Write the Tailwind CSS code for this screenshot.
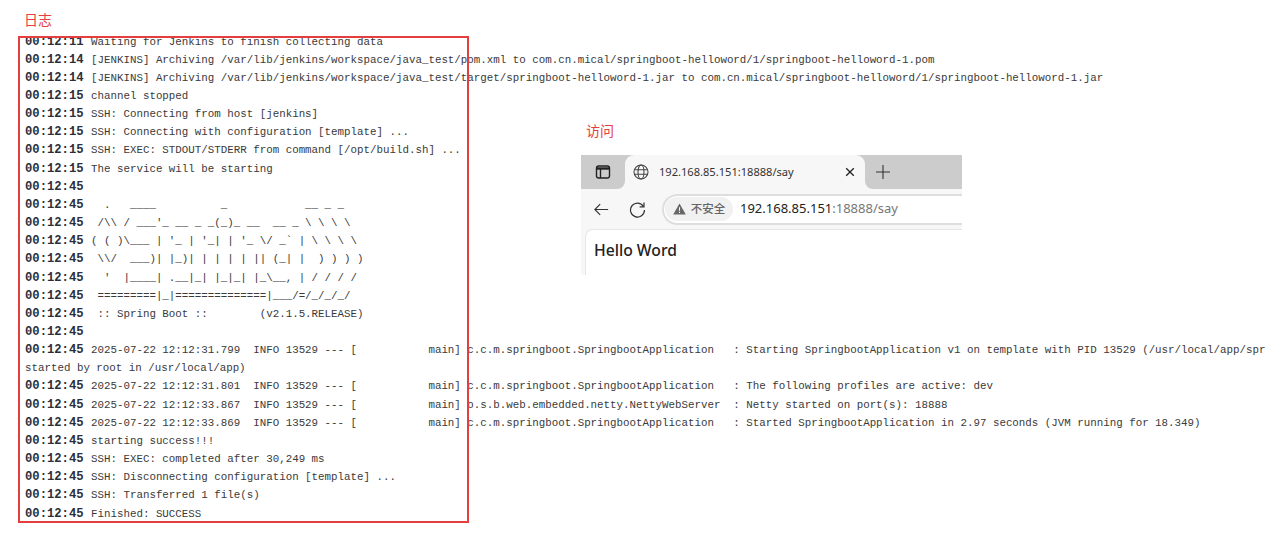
<!DOCTYPE html>
<html lang="en">
<head>
  <meta charset="UTF-8" />
  <title>日志</title>
  <script src="https://cdn.jsdelivr.net/npm/@tailwindcss/browser@4"></script>
</head>
<body class="bg-white">
<div class="relative w-[1274px] h-[538px] overflow-hidden font-['Liberation_Mono',monospace]">

  <!-- heading -->
  <div class="h-[36px] pl-[24px] pt-[9px] text-[14px] leading-[20px] text-[#e53e3e] font-['Noto_Sans_CJK_SC','Noto_Sans',sans-serif]">日志</div>

  <!-- log lines -->
  <div class="h-[486px] overflow-hidden pl-[25px] text-[10.82px] leading-[18.16px] text-[#3a3a3a] [&>div]:h-[18.16px] [&>div]:whitespace-pre [&_b]:inline-block [&_b]:w-[66px] [&_b]:text-[12.2px] [&_b]:text-[#2b2f3a]">
    <div class="-mt-[3.5px]"><b>00:12:11</b>Waiting for Jenkins to finish collecting data</div>
    <div><b>00:12:14</b>[JENKINS] Archiving /var/lib/jenkins/workspace/java_test/pom.xml to com.cn.mical/springboot-helloword/1/springboot-helloword-1.pom</div>
    <div><b>00:12:14</b>[JENKINS] Archiving /var/lib/jenkins/workspace/java_test/target/springboot-helloword-1.jar to com.cn.mical/springboot-helloword/1/springboot-helloword-1.jar</div>
    <div><b>00:12:15</b>channel stopped</div>
    <div><b>00:12:15</b>SSH: Connecting from host [jenkins]</div>
    <div><b>00:12:15</b>SSH: Connecting with configuration [template] ...</div>
    <div><b>00:12:15</b>SSH: EXEC: STDOUT/STDERR from command [/opt/build.sh] ...</div>
    <div><b>00:12:15</b>The service will be starting</div>
    <div><b>00:12:45</b></div>
    <div><b>00:12:45</b>  .   ____          _            __ _ _</div>
    <div><b>00:12:45</b> /\\ / ___'_ __ _ _(_)_ __  __ _ \ \ \ \</div>
    <div><b>00:12:45</b>( ( )\___ | '_ | '_| | '_ \/ _` | \ \ \ \</div>
    <div><b>00:12:45</b> \\/  ___)| |_)| | | | | || (_| |  ) ) ) )</div>
    <div><b>00:12:45</b>  '  |____| .__|_| |_|_| |_\__, | / / / /</div>
    <div><b>00:12:45</b> =========|_|==============|___/=/_/_/_/</div>
    <div><b>00:12:45</b> :: Spring Boot ::        (v2.1.5.RELEASE)</div>
    <div><b>00:12:45</b></div>
    <div><b>00:12:45</b>2025-07-22 12:12:31.799  INFO 13529 --- [           main] c.c.m.springboot.SpringbootApplication   : Starting SpringbootApplication v1 on template with PID 13529 (/usr/local/app/spr</div>
    <div>started by root in /usr/local/app)</div>
    <div><b>00:12:45</b>2025-07-22 12:12:31.801  INFO 13529 --- [           main] c.c.m.springboot.SpringbootApplication   : The following profiles are active: dev</div>
    <div><b>00:12:45</b>2025-07-22 12:12:33.867  INFO 13529 --- [           main] o.s.b.web.embedded.netty.NettyWebServer  : Netty started on port(s): 18888</div>
    <div><b>00:12:45</b>2025-07-22 12:12:33.869  INFO 13529 --- [           main] c.c.m.springboot.SpringbootApplication   : Started SpringbootApplication in 2.97 seconds (JVM running for 18.349)</div>
    <div><b>00:12:45</b>starting success!!!</div>
    <div><b>00:12:45</b>SSH: EXEC: completed after 30,249 ms</div>
    <div><b>00:12:45</b>SSH: Disconnecting configuration [template] ...</div>
    <div><b>00:12:45</b>SSH: Transferred 1 file(s)</div>
    <div><b>00:12:45</b>Finished: SUCCESS</div>
  </div>

  <!-- red highlight box over the log -->
  <div class="absolute left-[18px] top-[36px] w-[451px] h-[487px] border-2 border-[#e53e3e]"></div>

  <!-- browser snippet beside the log -->
  <div class="absolute left-[581px] top-[120px] w-[381px] font-['Noto_Sans','Open_Sans',sans-serif]">
    <div class="h-[35px] pl-[5px] text-[14px] leading-[20px] text-[#e53e3e] font-['Noto_Sans_CJK_SC','Noto_Sans',sans-serif]">访问</div>

    <!-- tab strip -->
    <div class="flex h-[34px] bg-[#f7f7f7]">
      <div class="flex w-[44px] items-center justify-center rounded-br-[8px] bg-[#cccccc]">
        <svg width="16" height="16" viewBox="0 0 16 16" fill="none" stroke="#222" stroke-width="1.4"><rect x="1.5" y="2" width="13" height="12" rx="2.2"/><path d="M1.5 4.5h13" stroke-width="2.4"/><path d="M5.5 5v9"/></svg>
      </div>
      <div class="w-[240px] bg-[#cccccc]">
        <div class="flex h-full items-center rounded-t-[9px] bg-[#f7f7f7] pl-[8px] pr-[10px]">
          <svg class="shrink-0" width="16" height="16" viewBox="0 0 16 16" fill="none" stroke="#444" stroke-width="1.1"><circle cx="8" cy="8" r="7"/><ellipse cx="8" cy="8" rx="3" ry="7"/><path d="M1.3 5.7h13.4M1.3 10.3h13.4"/></svg>
          <span class="ml-[10px] flex-1 text-[11.1px] text-[#333]">192.168.85.151:18888/say</span>
          <svg class="shrink-0" width="10" height="10" viewBox="0 0 10 10" stroke="#222" stroke-width="1.3"><path d="M1.2 1.2l7.6 7.6M8.8 1.2l-7.6 7.6"/></svg>
        </div>
      </div>
      <div class="flex flex-1 items-center rounded-bl-[8px] bg-[#cccccc] pl-[11px]">
        <svg width="14" height="14" viewBox="0 0 14 14" stroke="#333" stroke-width="1.1"><path d="M7 0v14M0 7h14"/></svg>
      </div>
    </div>

    <!-- address bar -->
    <div class="flex h-[40px] items-center overflow-hidden bg-[#f7f7f7] pl-[13px]">
      <svg class="shrink-0" width="15" height="13" viewBox="0 0 17 14" fill="none" stroke="#333" stroke-width="1.3"><path d="M16 7H1.2M7 1L1 7l6 6"/></svg>
      <svg class="ml-[20px] shrink-0" width="17" height="17" viewBox="0 0 17 17" fill="none" stroke="#333" stroke-width="1.2"><path d="M14.6 5.6A7 7 0 1 0 15.5 9"/><path d="M15 1.5v4.4h-4.4"/></svg>
      <div class="ml-[16px] flex h-[31px] w-[320px] shrink-0 items-center rounded-l-full border-2 border-r-0 border-[#dedede] bg-white pl-[1px]">
        <div class="flex h-[24px] w-[68px] shrink-0 items-center justify-center gap-[5px] rounded-full bg-[#f1f1f1] text-[11.5px] font-medium text-[#666] font-['Noto_Sans_CJK_SC',sans-serif]">
          <svg class="shrink-0" width="13" height="12" viewBox="0 0 13 12"><path d="M6.5 0.5L12.8 11.5H0.2Z" fill="#666"/><path d="M6.5 4.2v3.6M6.5 8.8v1.2" stroke="#fff" stroke-width="1.1"/></svg>
          不安全
        </div>
        <span class="ml-[7px] whitespace-nowrap text-[13px] text-[#222]">192.168.85.151<span class="text-[#777]">:18888/say</span></span>
      </div>
    </div>

    <!-- page content -->
    <div class="h-[46px] bg-[#f7f7f7] pl-[4px]">
      <div class="h-full rounded-tl-[8px] border-l border-t border-[#e6e6e6] bg-white pl-[8px] pt-[8px] text-[15.7px] leading-[24px] font-medium text-[#222]">Hello Word</div>
    </div>
  </div>
</div>
</body>
</html>
